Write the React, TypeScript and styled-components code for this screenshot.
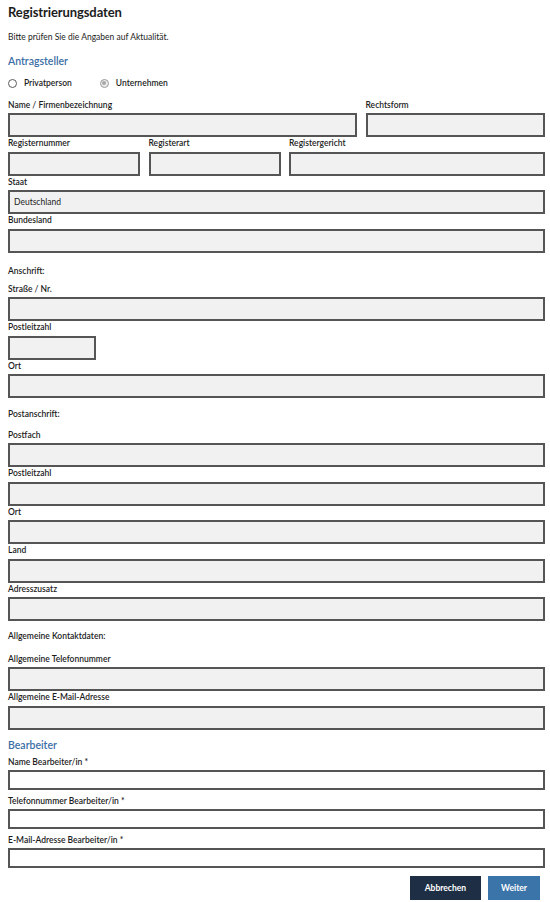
import React from 'react';
import styled, { createGlobalStyle } from 'styled-components';

const GlobalStyle = createGlobalStyle`
  html, body {
    margin: 0;
    padding: 0;
    background: #ffffff;
  }
  body {
    font-family: 'Lato', 'Open Sans', sans-serif;
    color: #1c1c1c;
  }
`;

const Page = styled.div`
  width: 550px;
  box-sizing: border-box;
  padding: 3px 5px 2px 8px;
`;

const Title = styled.h1`
  margin: 0;
  font-size: 13px;
  font-weight: 700;
  line-height: 18px;
  letter-spacing: -0.1px;
`;

const Intro = styled.p`
  margin: 10px 0 0;
  font-size: 8.5px;
  line-height: 12px;
`;

const SectionTitle = styled.h2<{ $top: number }>`
  margin: ${(p) => p.$top}px 0 0;
  font-size: 10.5px;
  font-weight: 600;
  line-height: 14px;
  color: #3a6ea5;
`;

const Note = styled.div<{ $top: number; $bottom: number }>`
  margin: ${(p) => p.$top}px 0 ${(p) => p.$bottom}px;
  font-size: 8.5px;
  font-weight: 600;
  line-height: 12px;
`;

const RadioRow = styled.div`
  display: flex;
  align-items: center;
  height: 14px;
  margin-top: 8px;
  margin-bottom: 8.5px;
  font-size: 8.5px;
  font-weight: 600;
`;

const RadioItem = styled.label`
  display: flex;
  align-items: center;
  gap: 7px;
  margin-right: 28px;
`;

const RadioDot = styled.span<{ $checked?: boolean }>`
  position: relative;
  width: 9px;
  height: 9px;
  box-sizing: border-box;
  border-radius: 50%;
  border: 1px solid ${(p) => (p.$checked ? '#9a9a9a' : '#5a5a5a')};
  background: ${(p) => (p.$checked ? '#ececec' : '#ffffff')};

  &::after {
    content: '';
    display: ${(p) => (p.$checked ? 'block' : 'none')};
    position: absolute;
    left: 1.5px;
    top: 1.5px;
    width: 4px;
    height: 4px;
    border-radius: 50%;
    background: #a8a8a8;
  }
`;

const Row = styled.div<{ $cols: string }>`
  display: grid;
  grid-template-columns: ${(p) => p.$cols};
  column-gap: 8.5px;
`;

const FieldBox = styled.div<{ $gap?: number }>`
  display: flex;
  flex-direction: column;
  margin-top: ${(p) => p.$gap ?? 0}px;
`;

const Label = styled.label`
  display: block;
  height: 14.5px;
  box-sizing: border-box;
  padding-bottom: 2px;
  font-size: 8.5px;
  font-weight: 600;
  line-height: 12.5px;
  white-space: nowrap;
`;

const Input = styled.input<{ $white?: boolean; $width?: number }>`
  display: block;
  box-sizing: border-box;
  width: ${(p) => (p.$width ? `${p.$width}px` : '100%')};
  height: ${(p) => (p.$white ? 20 : 24)}px;
  margin: 0;
  padding: 0 4px;
  border: 2px solid #555555;
  border-radius: 0;
  background: ${(p) => (p.$white ? '#ffffff' : '#f1f1f1')};
  font-family: 'Lato', 'Open Sans', sans-serif;
  font-size: 8.5px;
  color: #1c1c1c;
  outline: none;
`;

const Actions = styled.div`
  display: flex;
  justify-content: flex-end;
  gap: 7px;
  margin-top: 8px;
  padding-right: 5px;
`;

const Button = styled.button<{ $primary?: boolean }>`
  height: 24px;
  padding: 0 ${(p) => (p.$primary ? 13 : 15)}px;
  border: none;
  border-radius: 0;
  background: ${(p) => (p.$primary ? '#3a74a9' : '#1e2f45')};
  color: #ffffff;
  font-family: 'Lato', 'Open Sans', sans-serif;
  font-size: 8.5px;
  font-weight: 700;
  cursor: pointer;
`;

type FieldProps = {
  label: string;
  value?: string;
  white?: boolean;
  width?: number;
  gap?: number;
};

function Field({ label, value, white, width, gap }: FieldProps) {
  return (
    <FieldBox $gap={gap}>
      <Label>{label}</Label>
      <Input $white={white} $width={width} defaultValue={value} />
    </FieldBox>
  );
}

export default function App() {
  return (
    <>
      <GlobalStyle />
      <Page>
        <Title>Registrierungsdaten</Title>
        <Intro>Bitte prüfen Sie die Angaben auf Aktualität.</Intro>

        <SectionTitle $top={11}>Antragsteller</SectionTitle>
        <RadioRow>
          <RadioItem>
            <RadioDot />
            Privatperson
          </RadioItem>
          <RadioItem>
            <RadioDot $checked />
            Unternehmen
          </RadioItem>
        </RadioRow>

        <Row $cols="349px 1fr">
          <Field label="Name / Firmenbezeichnung" />
          <Field label="Rechtsform" />
        </Row>
        <Row $cols="132px 132px 1fr">
          <Field label="Registernummer" />
          <Field label="Registerart" />
          <Field label="Registergericht" />
        </Row>
        <Field label="Staat" value="Deutschland" />
        <Field label="Bundesland" />

        <Note $top={12} $bottom={6}>Anschrift:</Note>
        <Field label="Straße / Nr." />
        <Field label="Postleitzahl" width={88} />
        <Field label="Ort" />

        <Note $top={10} $bottom={8.5}>Postanschrift:</Note>
        <Field label="Postfach" />
        <Field label="Postleitzahl" />
        <Field label="Ort" />
        <Field label="Land" />
        <Field label="Adresszusatz" />

        <Note $top={9} $bottom={10.5}>Allgemeine Kontaktdaten:</Note>
        <Field label="Allgemeine Telefonnummer" />
        <Field label="Allgemeine E-Mail-Adresse" />

        <SectionTitle $top={8.5}>Bearbeiter</SectionTitle>
        <Field label="Name Bearbeiter/in *" white gap={3.5} />
        <Field label="Telefonnummer Bearbeiter/in *" white gap={4.5} />
        <Field label="E-Mail-Adresse Bearbeiter/in *" white gap={4.5} />

        <Actions>
          <Button type="button">Abbrechen</Button>
          <Button type="button" $primary>
            Weiter
          </Button>
        </Actions>
      </Page>
    </>
  );
}
